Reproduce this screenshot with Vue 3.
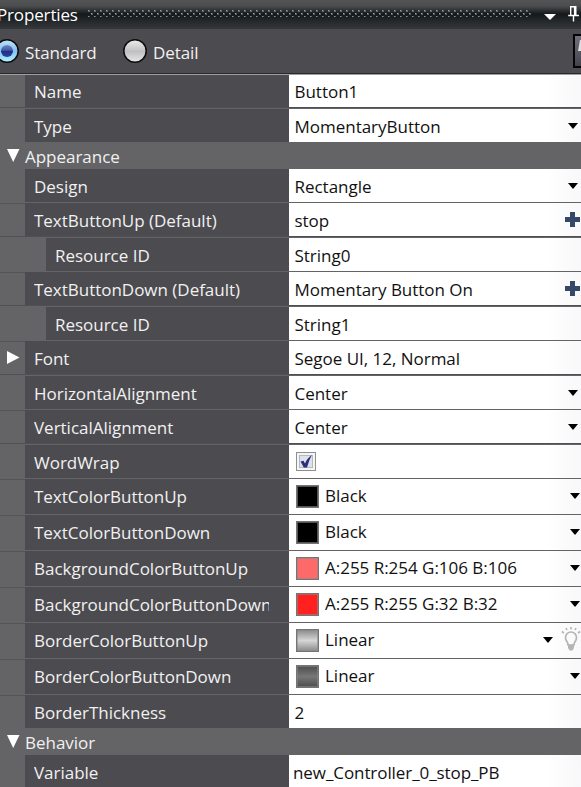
<script setup>
import { ref } from 'vue'

const mode = ref('Standard')

const rows = [
  { label: 'Name', value: 'Button1', gap: 2, kind: 'first' },
  { label: 'Type', value: 'MomentaryButton', drop: true, gap: 0 },
  { section: 'Appearance' },
  { label: 'Design', value: 'Rectangle', drop: true, gap: 1 },
  { label: 'TextButtonUp (Default)', value: 'stop', plus: true, gap: 2 },
  { label: 'Resource ID', value: 'String0', sub: true, gap: 1 },
  { label: 'TextButtonDown (Default)', value: 'Momentary Button On', plus: true, gap: 2 },
  { label: 'Resource ID', value: 'String1', sub: true, gap: 1 },
  { label: 'Font', value: 'Segoe UI, 12, Normal', expand: true, gap: 2 },
  { label: 'HorizontalAlignment', value: 'Center', drop: true, gap: 1 },
  { label: 'VerticalAlignment', value: 'Center', drop: true, gap: 2 },
  { label: 'WordWrap', check: true, gap: 1 },
  { label: 'TextColorButtonUp', value: 'Black', swatch: 'black', drop: true, gap: 1 },
  { label: 'TextColorButtonDown', value: 'Black', swatch: 'black', drop: true, gap: 1 },
  { label: 'BackgroundColorButtonUp', value: 'A:255 R:254 G:106 B:106', swatch: 'pink', drop: true, gap: 1 },
  { label: 'BackgroundColorButtonDown', value: 'A:255 R:255 G:32 B:32', swatch: 'red', drop: true, gap: 1 },
  { label: 'BorderColorButtonUp', value: 'Linear', swatch: 'light', drop: true, bulb: true, gap: 1 },
  { label: 'BorderColorButtonDown', value: 'Linear', swatch: 'dark', drop: true, gap: 1 },
  { label: 'BorderThickness', value: '2', gap: 0 },
  { section: 'Behavior' },
  { label: 'Variable', value: 'new_Controller_0_stop_PB', gap: 0, kind: 'last' },
]
</script>

<template>
  <div class="panel">
    <header class="titlebar">
      <span class="title">Properties</span>
      <svg class="grip" width="444" height="8">
        <defs>
          <pattern id="dots" width="6" height="8" patternUnits="userSpaceOnUse">
            <rect x="0" y="0" width="2" height="2" fill="#63666a" />
            <rect x="0" y="0" width="1" height="1" fill="#8f9294" />
            <rect x="3" y="3" width="2" height="2" fill="#5a5e60" />
            <rect x="3" y="3" width="1" height="1" fill="#a0a3a5" />
            <rect x="0" y="6" width="2" height="1" fill="#5a5e60" />
            <rect x="0" y="6" width="1" height="1" fill="#8f9294" />
          </pattern>
        </defs>
        <rect width="444" height="8" fill="url(#dots)" />
      </svg>
      <svg class="menu" width="12" height="6" viewBox="0 0 12 6"><path d="M0 0H12L6 6Z" fill="#fff" /></svg>
      <svg class="pin" width="12" height="16" viewBox="0 0 12 16">
        <path d="M2.7 0V9M2 .8H8.500M7.800 0V9M6.600 1V9M.2 9.500H11M5.500 10V15.500" fill="none" stroke="#fff" stroke-width="1.4" />
      </svg>
    </header>

    <div class="modes">
      <button class="mode" @click="mode = 'Standard'">
        <svg width="24" height="24" viewBox="0 0 24 24">
          <defs>
            <linearGradient id="blue" x1="0" y1="0" x2="0" y2="1">
              <stop offset="0" stop-color="#bde4fa" /><stop offset=".5" stop-color="#84c0f2" /><stop offset="1" stop-color="#b2f4ff" />
            </linearGradient>
            <linearGradient id="grey" x1="0" y1="0" x2="0" y2="1">
              <stop offset="0" stop-color="#ececec" /><stop offset=".46" stop-color="#c6c6c8" /><stop offset=".5" stop-color="#bebec0" /><stop offset="1" stop-color="#e7e7e7" />
            </linearGradient>
            <linearGradient id="core" x1="0" y1="0" x2="0" y2="1">
              <stop offset="0" stop-color="#6f86c5" /><stop offset=".45" stop-color="#4257a3" /><stop offset=".5" stop-color="#1d2e82" /><stop offset="1" stop-color="#2744a3" />
            </linearGradient>
          </defs>
          <circle cx="12" cy="12" r="11.2" :fill="mode === 'Standard' ? 'url(#blue)' : 'url(#grey)'" stroke="#0b0b0c" stroke-width="1.5" />
          <circle v-if="mode === 'Standard'" cx="12" cy="12" r="6" fill="url(#core)" />
        </svg>
        <span>Standard</span>
      </button>
      <button class="mode" @click="mode = 'Detail'">
        <svg width="24" height="24" viewBox="0 0 24 24">
          <circle cx="12" cy="12" r="11.2" :fill="mode === 'Detail' ? 'url(#blue)' : 'url(#grey)'" stroke="#0b0b0c" stroke-width="1.5" />
          <circle v-if="mode === 'Detail'" cx="12" cy="12" r="6" fill="url(#core)" />
        </svg>
        <span>Detail</span>
      </button>
      <span class="sort">
        <svg width="6" height="30" viewBox="0 0 6 30"><path d="M3 15L5 4H7V15Z" fill="#dedee2" /></svg>
      </span>
    </div>

    <template v-for="(r, i) in rows" :key="i">
      <div v-if="r.section" class="section">
        <svg width="13" height="13" viewBox="0 0 13 13"><path d="M0 0H12.5L6.2 13Z" fill="#fff" /></svg>
        <span>{{ r.section }}</span>
      </div>
      <div v-else class="row" :class="[r.kind, 'gap' + r.gap, { sub: r.sub, tall: r.swatch, after: i && rows[i - 1].gap === 1 }]">
        <div class="gutter">
          <svg v-if="r.expand" width="13" height="13" viewBox="0 0 13 13"><path d="M0 0L12.5 6.4L0 13Z" fill="#fff" /></svg>
        </div>
        <div class="label"><span>{{ r.label }}</span></div>
        <div class="value">
          <i v-if="r.swatch" class="swatch" :class="r.swatch"></i>
          <svg v-if="r.check" class="check" width="20" height="19" viewBox="0 0 20 19">
            <rect x=".5" y=".5" width="19" height="18" fill="#f5f5f5" stroke="#8e8f8f" />
            <rect x="3.5" y="3.5" width="13" height="12" fill="#dfe1e6" stroke="#b5b8bd" />
            <path d="M4.5 9.5L7.5 8.800L9 11.500C10.500 8 12 5.500 16 3C13.500 7 12.500 11 11 15.500H7.800Z" fill="#29307f" />
          </svg>
          <span class="text">{{ r.value }}</span>
          <svg v-if="r.drop" class="drop" width="10" height="6" viewBox="0 0 10 6"><path d="M0 0H10L5 6Z" fill="#000" /></svg>
          <svg v-if="r.plus" class="plus" width="15" height="15" viewBox="0 0 15 15"><path d="M5 0H10V5H15V10H10V15H5V10H0V5H5Z" fill="#344869" /></svg>
          <svg v-if="r.bulb" class="bulb" width="20" height="24" viewBox="0 0 20 24" fill="none" stroke="#b5b5b5">
            <path d="M7 18C7 14 4.500 14.500 4.500 10.500A5.500 5.500 0 0 1 15.500 10.500C15.500 14.500 13 14 13 18Z" stroke-width="1.7" />
            <path d="M7 17.500H13V21L11.500 23.500H8.500L7 21Z" fill="#b5b5b5" stroke="none" />
            <path d="M10 0V2.500M5 1L6 3M15 1L14 3M.8 4.500L3 6M19.200 4.500L17 6" stroke-width="1.6" />
          </svg>
        </div>
      </div>
    </template>
  </div>
</template>

<style>
body { margin: 0; overflow: hidden; }
</style>

<style scoped>
.panel {
  width: 581px;
  height: 787px;
  overflow: hidden;
  background: #4c4b4f;
  color: #f1f1f1;
  font: 17px/24px "Open Sans", "Noto Sans", sans-serif;
  letter-spacing: -0.02px;
  white-space: nowrap;
}
svg { display: block; flex: none; }
.titlebar {
  display: flex;
  height: 29px;
  background: linear-gradient(#535456 0, #4c4d4f 6px, #303335 10px, #15191b 14px, #1b1f21 17px, #35393b 29px);
}
.title { width: 88px; margin-left: -3px; padding-top: 3px; box-sizing: border-box; color: #fff; letter-spacing: -0.15px; }
.grip { margin: 10px 0 0 3px; }
.menu { margin: 14px 0 0 12px; }
.pin { margin: 6px 0 0 12px; }
.modes {
  display: flex;
  height: 46px;
  box-sizing: border-box;
  padding-top: 10px;
  border-bottom: 1px solid #a0a0a2;
  box-shadow: inset 0 -1px #29292c;
}
.mode {
  display: flex;
  gap: 6px;
  height: 24px;
  padding: 0;
  border: 0;
  background: none;
  color: inherit;
  font: inherit;
  letter-spacing: -0.1px;
}
.mode span { padding-top: 2px; }
.mode:first-child { width: 128px; margin-left: -5px; }
.sort {
  width: 8px;
  height: 34px;
  box-sizing: border-box;
  margin: -5px 0 0 auto;
  border: 2px solid #050505;
  border-right: 0;
  background: linear-gradient(#70717b, #42434c);
}
.section {
  display: flex;
  height: 27px;
  gap: 5px;
  padding-left: 7px;
  box-sizing: border-box;
  background: #646466;
}
.section svg { margin-top: 7px; }
.section span { padding-top: 3px; }
.row {
  display: grid;
  grid-template-columns: 25px 264px 1fr;
  height: 33px;
}
.row.sub { grid-template-columns: 46px 243px 1fr; }
.row.first { height: 32px; }
.row.last { height: 32px; }
.row.tall { height: 35px; }
.gap1 { border-bottom: 1px solid #646466; }
.gap2 { height: 34px; grid-template-rows: 33px 1px; border-bottom: 1px solid #646466; }
.gap2::after { content: ""; grid-column: 1 / -1; height: 1px; background: #505054; }
.gap2.first { height: 33px; grid-template-rows: 32px 1px; }
.gutter { background: #646466; }
.after .gutter { box-shadow: inset 0 1px #555558; }
.gutter svg { margin: 10px 0 0 7px; }
.label { padding: 6px 20px 0 9px; overflow: hidden; }
.label span { display: block; overflow: hidden; }
.first .label, .first .value { padding-top: 5px; }
.value {
  display: flex;
  padding: 6px 3px 0 5.5px;
  overflow: hidden;
  background: linear-gradient(90deg, #fff 88%, #f8f8fa);
  color: #111;
}
.last .value { padding-left: 4px; letter-spacing: -0.08px; }
.text { flex: 1; }
.drop { margin-top: 8px; }
.plus { margin: 3px -2px 0 0; }
.check { margin: 1px 0 0 1.5px; }
.tall .value { padding: 5px 1px 0 6px; }
.tall .drop { margin-top: 9px; }
.swatch {
  width: 23px;
  height: 23px;
  box-sizing: border-box;
  margin: 1px 6px 0 1px;
  border: 1px solid #747474;
  box-shadow: inset 0 0 0 1px #8b8b8b99;
}
.black { background: #000; }
.pink { background: #fe6a6a; }
.red { background: #ff2020; }
.light { background: linear-gradient(#8b8b8b, #d6d6d6 50%, #8b8b8b); }
.dark { background: linear-gradient(#4d4d4d, #777 50%, #4d4d4d); }
.bulb { margin: -1px -1px 0 8px; }
</style>
